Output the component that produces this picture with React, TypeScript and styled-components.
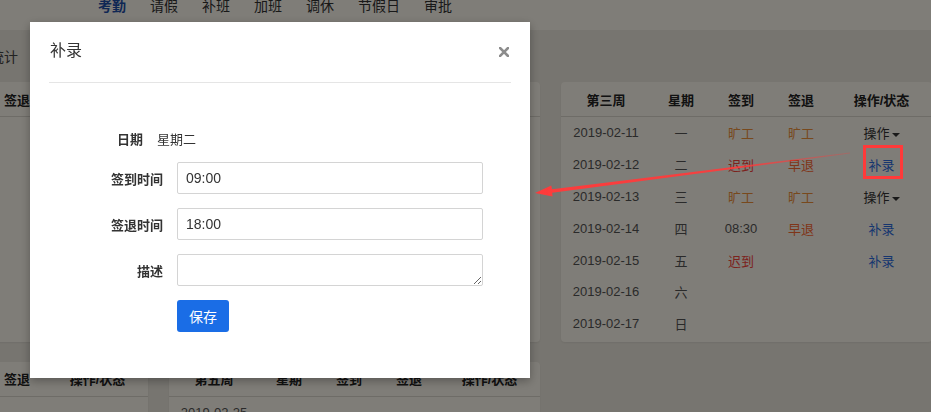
import React from "react";
import styled, { createGlobalStyle, css } from "styled-components";

type Tone = "absent" | "late" | "early" | "link" | "plain";

type DayRow = {
  date: string;
  weekday: string;
  checkIn?: { text: string; tone: Tone };
  checkOut?: { text: string; tone: Tone };
  action?: "menu" | "fix";
};

type Week = {
  title: string;
  days: DayRow[];
};

const GlobalStyle = createGlobalStyle`
  html, body {
    margin: 0;
    padding: 0;
  }
  body {
    width: 931px;
    height: 412px;
    overflow: hidden;
    background: #eeeae0;
    color: #333;
    font-family: "Liberation Sans", "Noto Sans CJK SC", sans-serif;
  }
`;

const Page = styled.div`
  width: 931px;
  height: 412px;
  overflow: hidden;
`;

const Nav = styled.nav`
  height: 30px;
  display: flex;
  gap: 24px;
  padding-left: 98px;
  background: #fefaf0;
  overflow: hidden;
`;

const Tab = styled.a<{ $active?: boolean }>`
  margin-top: -3px;
  font-size: 14px;
  line-height: 18px;
  text-decoration: none;
  color: ${(p) => (p.$active ? "#1f4fa8" : "#333")};
  font-weight: ${(p) => (p.$active ? 700 : 400)};
`;

const TitleBar = styled.div`
  height: 52px;
  display: flex;
  align-items: center;
  margin-left: -10px;
  font-size: 14px;
  color: #444;
`;

const Weeks = styled.div`
  display: grid;
  grid-template-columns: repeat(3, 371px);
  gap: 20px 21px;
  margin-left: -223px;
`;

const Card = styled.section`
  padding-bottom: 2px;
  background: #fffaf0;
  border-radius: 4px;
  box-shadow: 0 1px 2px rgba(0, 0, 0, 0.06);
`;

const Row = styled.div<{ $head?: boolean }>`
  display: grid;
  grid-template-columns: 90px 60px 60px 60px 1fr;
  align-items: center;
  height: 31.8px;
  font-size: 13px;
  text-align: center;
  color: #555;
  ${(p) =>
    p.$head &&
    css`
      height: 35px;
      box-sizing: border-box;
      border-bottom: 1px solid #dcd8ce;
      font-weight: 700;
      color: #222;
    `}
`;

const toneColor: Record<Tone, string> = {
  absent: "#f0923a",
  late: "#f8443a",
  early: "#ff6a33",
  link: "#2d6cdf",
  plain: "#555",
};

const Status = styled.span<{ $tone: Tone }>`
  color: ${(p) => toneColor[p.$tone]};
`;

const ActionMenu = styled.span`
  color: #333;
  white-space: nowrap;
`;

const Caret = styled.span`
  display: inline-block;
  margin-left: 2px;
  vertical-align: middle;
  border-top: 4px solid #333;
  border-left: 4px solid transparent;
  border-right: 4px solid transparent;
`;

const Backdrop = styled.div`
  position: fixed;
  inset: 0;
  z-index: 10;
  background: rgba(0, 0, 0, 0.5);
`;

const Dialog = styled.div`
  position: fixed;
  left: 30px;
  top: 22px;
  z-index: 20;
  width: 500px;
  height: 356px;
  background: #fff;
  box-shadow: 0 3px 9px rgba(0, 0, 0, 0.3);
`;

const DialogHeader = styled.header`
  height: 61px;
  box-sizing: border-box;
  margin: 0 19px;
  padding: 19px 2px 0 1px;
  display: flex;
  justify-content: space-between;
  align-items: flex-start;
  border-bottom: 1px solid #e5e5e5;
`;

const DialogTitle = styled.h4`
  margin: 0;
  font-size: 16px;
  line-height: 20px;
  font-weight: 400;
  color: #333;
`;

const CloseButton = styled.button`
  margin-top: 6px;
  padding: 0;
  border: 0;
  background: none;
  line-height: 0;
`;

const DialogBody = styled.div`
  padding-top: 39px;
  display: flex;
  flex-direction: column;
  gap: 14px;
`;

const DateLine = styled.div`
  height: 32px;
  margin-bottom: -6px;
  display: flex;
  align-items: center;
  gap: 14px;
  padding-left: 87px;
  font-size: 13px;
  color: #333;
`;

const Field = styled.div`
  display: grid;
  grid-template-columns: 133px 306px;
  column-gap: 14px;
  align-items: center;
`;

const Label = styled.label`
  text-align: right;
  font-size: 13px;
  font-weight: 700;
  color: #333;
`;

const fieldBox = css`
  width: 306px;
  height: 32px;
  box-sizing: border-box;
  border: 1px solid #d4d4d4;
  border-radius: 2px;
  padding: 0 8px;
  font-family: "Liberation Sans", "Noto Sans CJK SC", sans-serif;
  font-size: 14px;
  color: #333;
  background: #fff;
`;

const Input = styled.input`
  ${fieldBox}
`;

const TextArea = styled.textarea`
  ${fieldBox}
  display: block;
  padding-top: 6px;
  resize: vertical;
`;

const SaveButton = styled.button`
  grid-column: 2;
  width: 52px;
  height: 32px;
  border: 0;
  border-radius: 3px;
  background: #1a6de6;
  color: #fff;
  font-family: "Liberation Sans", "Noto Sans CJK SC", sans-serif;
  font-size: 14px;
`;

const Annotation = styled.svg`
  position: fixed;
  inset: 0;
  z-index: 30;
  pointer-events: none;
`;

const weeks: Week[] = [
  {
    title: "第一周",
    days: [
      { date: "2019-01-28", weekday: "一", checkIn: { text: "08:52", tone: "plain" } },
      { date: "2019-01-29", weekday: "二", checkIn: { text: "08:47", tone: "plain" } },
      { date: "2019-01-30", weekday: "三", checkIn: { text: "08:55", tone: "plain" } },
      { date: "2019-01-31", weekday: "四", checkIn: { text: "08:49", tone: "plain" } },
      { date: "2019-02-01", weekday: "五", checkIn: { text: "08:58", tone: "plain" } },
      { date: "2019-02-02", weekday: "六" },
      { date: "2019-02-03", weekday: "日" },
    ],
  },
  {
    title: "第二周",
    days: [
      { date: "2019-02-04", weekday: "一" },
      { date: "2019-02-05", weekday: "二" },
      { date: "2019-02-06", weekday: "三" },
      { date: "2019-02-07", weekday: "四" },
      { date: "2019-02-08", weekday: "五" },
      { date: "2019-02-09", weekday: "六" },
      { date: "2019-02-10", weekday: "日" },
    ],
  },
  {
    title: "第三周",
    days: [
      {
        date: "2019-02-11",
        weekday: "一",
        checkIn: { text: "旷工", tone: "absent" },
        checkOut: { text: "旷工", tone: "absent" },
        action: "menu",
      },
      {
        date: "2019-02-12",
        weekday: "二",
        checkIn: { text: "迟到", tone: "late" },
        checkOut: { text: "早退", tone: "early" },
        action: "fix",
      },
      {
        date: "2019-02-13",
        weekday: "三",
        checkIn: { text: "旷工", tone: "absent" },
        checkOut: { text: "旷工", tone: "absent" },
        action: "menu",
      },
      {
        date: "2019-02-14",
        weekday: "四",
        checkIn: { text: "08:30", tone: "plain" },
        checkOut: { text: "早退", tone: "early" },
        action: "fix",
      },
      { date: "2019-02-15", weekday: "五", checkIn: { text: "迟到", tone: "late" }, action: "fix" },
      { date: "2019-02-16", weekday: "六" },
      { date: "2019-02-17", weekday: "日" },
    ],
  },
  {
    title: "第四周",
    days: [
      { date: "2019-02-18", weekday: "一" },
      { date: "2019-02-19", weekday: "二" },
    ],
  },
  {
    title: "第五周",
    days: [
      { date: "2019-02-25", weekday: "一" },
      { date: "2019-02-26", weekday: "二" },
    ],
  },
];

const tabs = ["考勤", "请假", "补班", "加班", "调休", "节假日", "审批"];

const WeekCard = ({ week }: { week: Week }) => (
  <Card>
    <Row $head>
      <span>{week.title}</span>
      <span>星期</span>
      <span>签到</span>
      <span>签退</span>
      <span>操作/状态</span>
    </Row>
    {week.days.map((day) => (
      <Row key={day.date}>
        <span>{day.date}</span>
        <span>{day.weekday}</span>
        <span>{day.checkIn && <Status $tone={day.checkIn.tone}>{day.checkIn.text}</Status>}</span>
        <span>{day.checkOut && <Status $tone={day.checkOut.tone}>{day.checkOut.text}</Status>}</span>
        <span>
          {day.action === "menu" && (
            <ActionMenu>
              操作
              <Caret />
            </ActionMenu>
          )}
          {day.action === "fix" && <Status $tone="link">补录</Status>}
        </span>
      </Row>
    ))}
  </Card>
);

export default function App() {
  return (
    <>
      <GlobalStyle />
      <Page>
        <Nav>
          {tabs.map((tab, i) => (
            <Tab key={tab} $active={i === 0}>
              {tab}
            </Tab>
          ))}
        </Nav>
        <TitleBar>统计</TitleBar>
        <Weeks>
          {weeks.map((week) => (
            <WeekCard key={week.title} week={week} />
          ))}
        </Weeks>
      </Page>

      <Backdrop />

      <Dialog>
        <DialogHeader>
          <DialogTitle>补录</DialogTitle>
          <CloseButton aria-label="关闭">
            <svg width="10" height="10" viewBox="0 0 10 10">
              <path d="M1 1 L9 9 M9 1 L1 9" stroke="#8c8c8c" strokeWidth="2.6" strokeLinecap="square" />
            </svg>
          </CloseButton>
        </DialogHeader>
        <DialogBody>
          <DateLine>
            <strong>日期</strong>
            <span>星期二</span>
          </DateLine>
          <Field>
            <Label>签到时间</Label>
            <Input defaultValue="09:00" />
          </Field>
          <Field>
            <Label>签退时间</Label>
            <Input defaultValue="18:00" />
          </Field>
          <Field>
            <Label>描述</Label>
            <TextArea />
          </Field>
          <Field>
            <SaveButton>保存</SaveButton>
          </Field>
        </DialogBody>
      </Dialog>

      <Annotation width="931" height="412" viewBox="0 0 931 412">
        <defs>
          <linearGradient id="arrowFade" x1="850" y1="153" x2="536" y2="193" gradientUnits="userSpaceOnUse">
            <stop offset="0" stopColor="#ff3b3b" stopOpacity="0.25" />
            <stop offset="0.35" stopColor="#ff3b3b" stopOpacity="0.9" />
            <stop offset="1" stopColor="#ff3b3b" stopOpacity="1" />
          </linearGradient>
        </defs>
        <rect x="864.5" y="146.5" width="37" height="31" fill="none" stroke="#ff3a3a" strokeWidth="3" />
        <polygon
          points="850,152.4 552,189.3 551.3,185.5 535,193 552.6,196.5 552.2,192.7 850,153.6"
          fill="url(#arrowFade)"
        />
      </Annotation>
    </>
  );
}
